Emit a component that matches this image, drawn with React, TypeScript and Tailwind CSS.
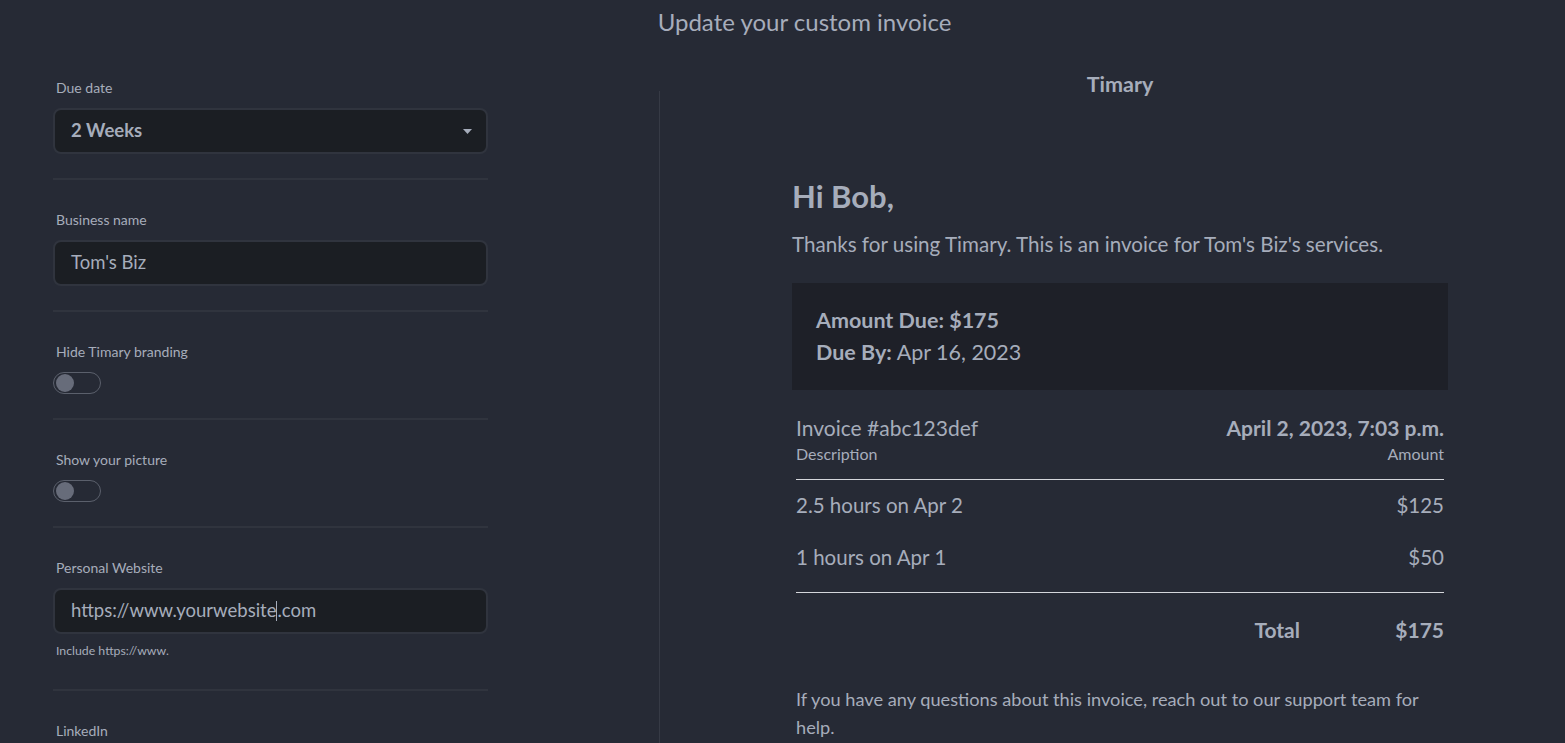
import React from "react"

const font = { fontFamily: "Lato, 'Open Sans', sans-serif" }

function Label({ children }: { children: React.ReactNode }) {
  return <div className="h-5 text-[14px] leading-5 pl-[3px] text-[#a6adbb]">{children}</div>
}

function Divider() {
  return <div className="mt-6 h-[2px] bg-[#30343e]" />
}

function Toggle() {
  return (
    <div className="mt-[10px] w-12 h-[22px] rounded-full border border-[#5b606c] flex items-center px-[2px]">
      <div className="w-[18px] h-[18px] rounded-full bg-[#676c7a]" />
    </div>
  )
}

function Field({ children, bold }: { children?: React.ReactNode; bold?: boolean }) {
  return (
    <div
      className={`mt-[10px] h-[46px] rounded-lg border-2 border-[#30343e] bg-[#1b1e23] flex items-center px-4 text-[18.5px] text-[#a6adbb] ${bold ? "font-bold" : ""}`}
    >
      {children}
    </div>
  )
}

export default function App() {
  return (
    <div className="min-h-screen w-full bg-[#262a35] text-[#a6adbb] overflow-hidden" style={font}>
      <div className="h-[46px] flex items-center justify-center text-[24px] pb-[2px] pl-[44px]">
        Update your custom invoice
      </div>
      <div className="flex">
        {/* settings column */}
        <div className="w-[659px] shrink-0 pl-[53px] pt-[32px]">
          <div className="w-[435px]">
            <Label>Due date</Label>
            <Field bold>
              <span className="flex-1">2 Weeks</span>
              <svg width="9" height="5" viewBox="0 0 9 5" className="mr-[-2px]">
                <path d="M0 0h9L4.5 5z" fill="#a6adbb" />
              </svg>
            </Field>
            <Divider />

            <div className="pt-[30px]">
              <Label>Business name</Label>
              <Field>Tom's Biz</Field>
              <Divider />
            </div>

            <div className="pt-[30px]">
              <Label>Hide Timary branding</Label>
              <Toggle />
              <Divider />
            </div>

            <div className="pt-[30px]">
              <Label>Show your picture</Label>
              <Toggle />
              <Divider />
            </div>

            <div className="pt-[30px]">
              <Label>Personal Website</Label>
              <Field>
                <span>https://www.yourwebsite</span>
                <span className="inline-block w-px h-[20px] bg-[#a6adbb]" />
                <span>.com</span>
              </Field>
              <div className="mt-[10px] text-[12.3px] leading-[14px] pl-[3px]">Include https://www.</div>
              <div className="mt-[31px] h-[2px] bg-[#30343e]" />
            </div>

            <div className="pt-[30px]">
              <Label>LinkedIn</Label>
              <Field />
            </div>
          </div>
        </div>

        <div className="w-px bg-[#363a45] mt-[45px] self-stretch" />

        {/* preview column */}
        <div className="flex-1 pt-[24px]">
          <div className="w-[656px] ml-[132px]">
            <div className="text-center text-[21.5px] leading-7 font-bold">Timary</div>

            <div className="mt-[80px] text-[31px] leading-9 font-bold">Hi Bob,</div>
            <div className="mt-[16px] text-[20.6px] leading-7">
              Thanks for using Timary. This is an invoice for Tom's Biz's services.
            </div>

            <div className="mt-[25px] bg-[#1e2028] px-6 pt-[21px] pb-[22px] text-[21.5px] leading-8">
              <div className="font-bold">Amount Due: $175</div>
              <div>
                <span className="font-bold">Due By:</span> Apr 16, 2023
              </div>
            </div>

            <div className="px-1 mt-[24px]">
              <div className="flex justify-between text-[21px] leading-7">
                <span>Invoice #abc123def</span>
                <span className="font-bold">April 2, 2023, 7:03 p.m.</span>
              </div>
              <div className="flex justify-between text-[16px] leading-6">
                <span>Description</span>
                <span>Amount</span>
              </div>
              <div className="mt-[13px] h-px bg-[#d4d6db]" />
              <div className="flex justify-between text-[20.5px] leading-7 mt-[11px]">
                <span>2.5 hours on Apr 2</span>
                <span>$125</span>
              </div>
              <div className="flex justify-between text-[20.5px] leading-7 mt-[24px]">
                <span>1 hours on Apr 1</span>
                <span>$50</span>
              </div>
              <div className="mt-[21px] h-px bg-[#d4d6db]" />
              <div className="flex justify-end text-[21px] leading-7 font-bold mt-[23px]">
                <span>Total</span>
                <span className="w-[144px] text-right">$175</span>
              </div>
              <div className="mt-[41px] text-[18.2px] leading-7">
                If you have any questions about this invoice, reach out to our support team for help.
              </div>
            </div>
          </div>
        </div>
      </div>
    </div>
  )
}
